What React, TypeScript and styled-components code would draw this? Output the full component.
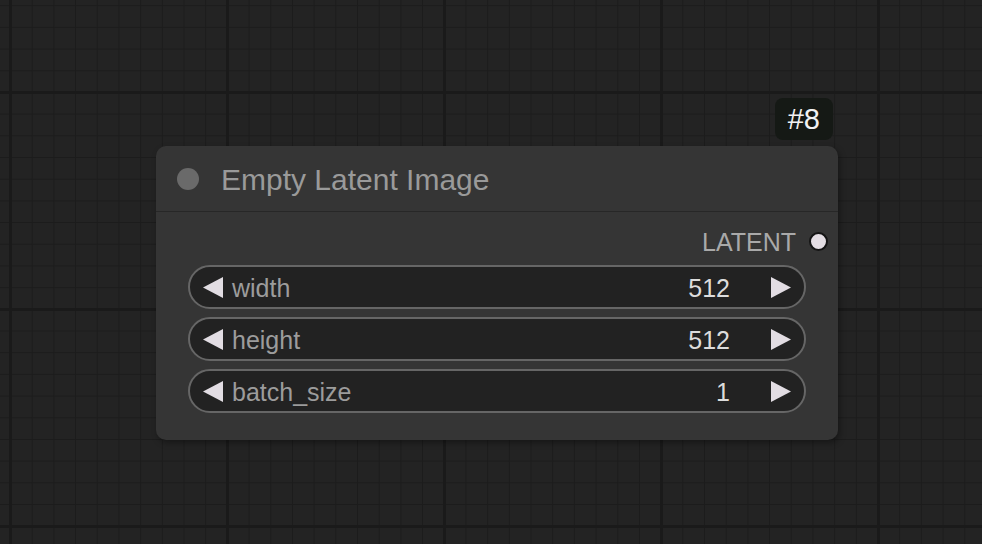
import React from "react";
import styled, { createGlobalStyle } from "styled-components";

const GlobalStyle = createGlobalStyle`
  html, body {
    margin: 0;
    padding: 0;
    background: #222;
  }
  body {
    font-family: "Liberation Sans", Arial, sans-serif;
  }
`;

const widgets = [
  { name: "width", value: "512" },
  { name: "height", value: "512" },
  { name: "batch_size", value: "1" },
];

const Triangle = ({ dir }: { dir: "left" | "right" }) => (
  <svg width="20" height="21" viewBox="0 0 20 21">
    {dir === "left" ? (
      <polygon points="20,0 20,21 0,10.5" fill="#e2dde3" />
    ) : (
      <polygon points="0,0 0,21 20,10.5" fill="#e2dde3" />
    )}
  </svg>
);

const App = () => {
  return (
    <>
      <GlobalStyle />
      <Canvas>
        <Node>
          <Badge>#8</Badge>
          <TitleBar>
            <Dot />
            <Title>Empty Latent Image</Title>
          </TitleBar>
          <Body>
            <OutputRow>
              <OutputLabel>LATENT</OutputLabel>
              <Slot />
            </OutputRow>
            <WidgetList>
              {widgets.map((w) => (
                <Widget key={w.name}>
                  <Triangle dir="left" />
                  <WidgetName>{w.name}</WidgetName>
                  <WidgetValue>{w.value}</WidgetValue>
                  <Triangle dir="right" />
                </Widget>
              ))}
            </WidgetList>
          </Body>
        </Node>
      </Canvas>
    </>
  );
};

export default App;

const Canvas = styled.div`
  position: relative;
  width: 982px;
  height: 544px;
  overflow: hidden;
  background-color: #232323;
  background-image:
    linear-gradient(to right, #1a1a1a 3px, transparent 3px),
    linear-gradient(to bottom, #1a1a1a 3px, transparent 3px),
    linear-gradient(to right, #1c1c1c 1px, transparent 1px),
    linear-gradient(to bottom, #1c1c1c 1px, transparent 1px);
  background-size: 217px 217px, 217px 217px, 21.7px 21.7px, 21.7px 21.7px;
  background-position: 9px 0, 0 91px, 10px 0, 0 5.2px;
`;

const Node = styled.div`
  position: absolute;
  left: 156px;
  top: 146px;
  width: 682px;
  height: 294px;
  box-sizing: border-box;
  display: flex;
  flex-direction: column;
  background: #353535;
  border-radius: 10px;
  box-shadow: 2px 3px 6px rgba(0, 0, 0, 0.35);
`;

const Badge = styled.div`
  position: absolute;
  right: 5px;
  top: -48px;
  height: 42px;
  padding: 0 13px;
  display: flex;
  align-items: center;
  background: #151915;
  color: #f2f2f2;
  font-size: 29px;
  border-radius: 8px;
`;

const TitleBar = styled.div`
  display: flex;
  align-items: center;
  gap: 22px;
  height: 65px;
  padding-left: 21px;
  border-bottom: 1px solid #272727;
`;

const Dot = styled.div`
  width: 22px;
  height: 22px;
  border-radius: 50%;
  background: #6a6a6a;
`;

const Title = styled.div`
  color: #9a9a9a;
  font-size: 30px;
  line-height: 1;
  padding-top: 2px;
`;

const Body = styled.div`
  display: flex;
  flex-direction: column;
  padding: 13px 10px 0 32px;
`;

const OutputRow = styled.div`
  display: flex;
  align-items: center;
  justify-content: flex-end;
  gap: 13px;
  height: 32px;
`;

const OutputLabel = styled.div`
  color: #a9a9a9;
  font-size: 25px;
  line-height: 1;
  padding-top: 2px;
`;

const Slot = styled.div`
  width: 15px;
  height: 15px;
  border-radius: 50%;
  background: #e3dde3;
  border: 2.5px solid #141414;
`;

const WidgetList = styled.div`
  display: flex;
  flex-direction: column;
  gap: 8px;
  margin-top: 8px;
  margin-right: 22px;
`;

const Widget = styled.div`
  display: flex;
  align-items: center;
  height: 44px;
  box-sizing: border-box;
  padding: 0 13px 0 13px;
  background: #222;
  border: 2px solid #666;
  border-radius: 22px;
`;

const WidgetName = styled.div`
  flex: 1;
  margin-left: 9px;
  color: #9c9c9c;
  font-size: 25px;
  line-height: 1;
  padding-top: 2px;
`;

const WidgetValue = styled.div`
  margin-right: 41px;
  color: #dcdcdc;
  font-size: 25px;
  line-height: 1;
  padding-top: 2px;
`;
